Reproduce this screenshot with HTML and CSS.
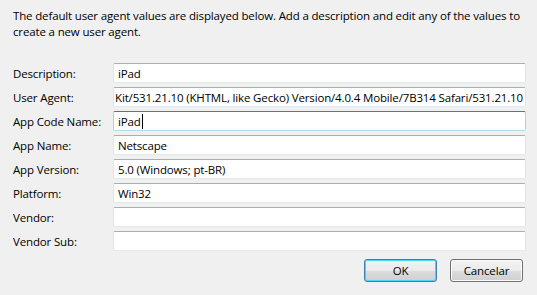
FILE: index.html
```html
<!DOCTYPE html>
<html lang="en">
<head>
<meta charset="UTF-8">
<title>User Agent</title>
<link rel="stylesheet" href="styles.css">
</head>
<body>
<div class="dialog">
  <p class="intro">The default user agent values are displayed below. Add a description and edit any of the values to create a new user agent.</p>

  <div class="fields">
    <label class="field-label">Description:</label>
    <div class="textbox">iPad</div>

    <label class="field-label">User Agent:</label>
    <div class="textbox scrolled">Kit/531.21.10 (KHTML, like Gecko) Version/4.0.4 Mobile/7B314 Safari/531.21.10</div>

    <label class="field-label">App Code Name:</label>
    <div class="textbox focused">iPad<span class="caret"></span></div>

    <label class="field-label">App Name:</label>
    <div class="textbox">Netscape</div>

    <label class="field-label">App Version:</label>
    <div class="textbox">5.0 (Windows; pt-BR)</div>

    <label class="field-label">Platform:</label>
    <div class="textbox">Win32</div>

    <label class="field-label">Vendor:</label>
    <div class="textbox"></div>

    <label class="field-label">Vendor Sub:</label>
    <div class="textbox"></div>
  </div>

  <div class="buttons">
    <button class="btn default">OK</button>
    <button class="btn">Cancelar</button>
  </div>
</div>
</body>
</html>
```

FILE: styles.css
```css
* {
  box-sizing: border-box;
}

body {
  margin: 0;
  background-color: #f0f0f0;
  font-family: "Open Sans", sans-serif;
  font-size: 11.5px;
  letter-spacing: -0.15px;
  color: #000;
}

.dialog {
  width: 537px;
  height: 295px;
  display: flex;
  flex-direction: column;
}

.intro {
  margin: 0;
  padding: 8px 10px 0 13px;
  line-height: 16px;
}

.fields {
  display: grid;
  grid-template-columns: 100px 413px;
  grid-auto-rows: 20px;
  row-gap: 4px;
  margin: 23px 0 0 13px;
}

.field-label {
  display: flex;
  align-items: center;
}

.textbox {
  display: flex;
  align-items: center;
  padding: 0 4px;
  background: #fff;
  border: 1px solid #e2e3ea;
  border-top-color: #abadb3;
  border-bottom-color: #e3e9ef;
  border-radius: 2px;
  white-space: nowrap;
  overflow: hidden;
}

.scrolled {
  padding: 0 3px 0 1px;
}

.focused {
  border-color: #b5cfe7;
  border-top-color: #3d7bad;
  border-bottom-color: #b7d9ed;
}

.caret {
  display: inline-block;
  width: 1px;
  height: 15px;
  margin-left: 1px;
  background: #000;
}

.buttons {
  display: flex;
  justify-content: flex-end;
  gap: 13px;
  padding: 8px 14px 0 0;
}

.btn {
  width: 73px;
  height: 23px;
  padding: 0;
  font: inherit;
  letter-spacing: inherit;
  color: #000;
  border: 1px solid #707070;
  border-radius: 3px;
  background: linear-gradient(#f2f2f2 0%, #ebebeb 50%, #dddddd 51%, #cfcfcf 100%);
  box-shadow: inset 0 0 0 1px #fcfcfc;
}

.btn.default {
  border-color: #3c7fb1;
  box-shadow: inset 0 0 0 1px #48d4ff;
}
```
